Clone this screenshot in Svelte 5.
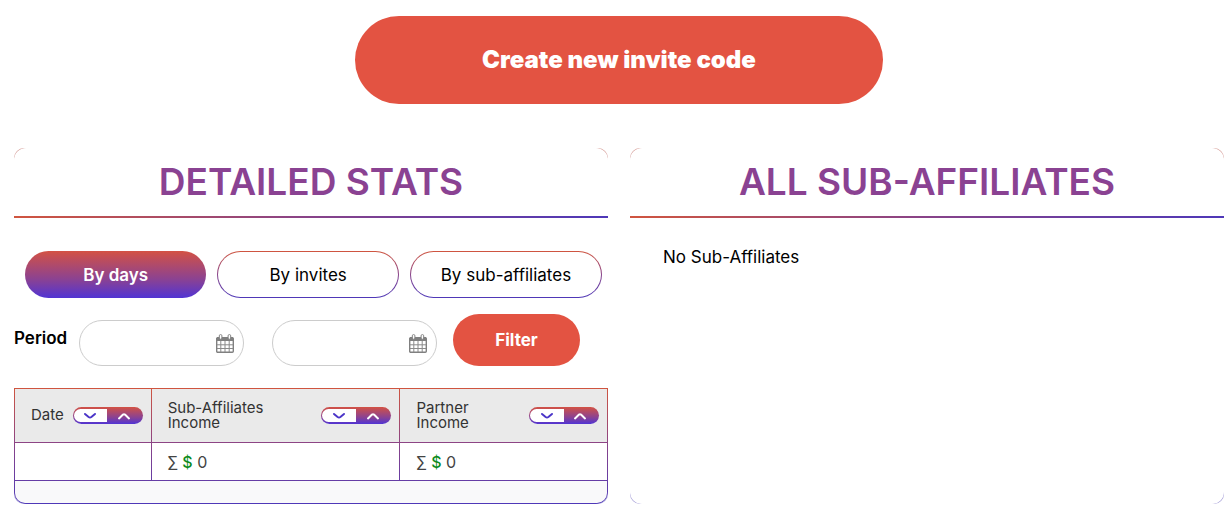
<script>
    const tabs = [
        { id: 'days', label: 'By days' },
        { id: 'invites', label: 'By invites' },
        { id: 'subs', label: 'By sub-affiliates' }
    ];

    const columns = [
        { id: 'date', label: 'Date' },
        { id: 'sub', label: 'Sub-Affiliates Income', total: 0 },
        { id: 'partner', label: 'Partner Income', total: 0 }
    ];

    let activeTab = $state('days');
    let sort = $state({ column: 'date', direction: 'asc' });
    let period = $state({ from: '', to: '' });

    const setSort = (column, direction) => {
        sort = { column, direction };
    };
</script>

{#snippet calendar()}
    <svg class="calendar" viewBox="0 0 18 19" aria-hidden="true">
        <path d="M1 3h16v4H1z" fill="#808080" />
        <rect x="0.7" y="3.6" width="16.6" height="14.7" rx="1" fill="none" stroke="#808080" stroke-width="1.4" />
        <path d="M4.8 7v11M9 7v11M13.2 7v11M1 10.8h16M1 14.5h16" stroke="#8a8a8a" stroke-width="1" />
        <rect x="3.3" y="0.6" width="2.6" height="4.6" rx="1.2" fill="#fff" stroke="#808080" />
        <rect x="12.1" y="0.6" width="2.6" height="4.6" rx="1.2" fill="#fff" stroke="#808080" />
    </svg>
{/snippet}

<main>
    <button class="create">Create new invite code</button>

    <div class="cards">
        <section class="card">
            <div class="card-body">
                <h2>Detailed stats</h2>

                <div class="tabs">
                    {#each tabs as tab}
                        <button class="tab" class:active={activeTab === tab.id} onclick={() => (activeTab = tab.id)}>
                            {tab.label}
                        </button>
                    {/each}
                </div>

                <form class="period" onsubmit={(ev) => ev.preventDefault()}>
                    <label class="period-label" for="from">Period</label>
                    <div class="date-box">
                        <input id="from" type="text" bind:value={period.from} />
                        {@render calendar()}
                    </div>
                    <div class="date-box second">
                        <input type="text" aria-label="Period end" bind:value={period.to} />
                        {@render calendar()}
                    </div>
                    <button class="filter">Filter</button>
                </form>

                <table>
                    <colgroup>
                        <col class="col-date" />
                        <col class="col-sub" />
                        <col />
                    </colgroup>
                    <thead>
                        <tr>
                            {#each columns as column}
                                <th>
                                    <div class="head">
                                        <span>{column.label}</span>
                                        <div class="sorter">
                                            <button aria-label="Sort descending" onclick={() => setSort(column.id, 'desc')}>
                                                <svg viewBox="0 0 12 6"><path d="M1 1l3.6 3q1.4 1 2.8 0L11 1" stroke="#4b35c8" /></svg>
                                            </button>
                                            <button class="up" aria-label="Sort ascending" onclick={() => setSort(column.id, 'asc')}>
                                                <svg viewBox="0 0 12 6"><path d="M1 5.4l4-3.8q1-.8 2 0l4 3.8" stroke="#fff" /></svg>
                                            </button>
                                        </div>
                                    </div>
                                </th>
                            {/each}
                        </tr>
                    </thead>
                    <tbody>
                        <tr>
                            {#each columns as column}
                                <td>
                                    {#if column.total !== undefined}
                                        ∑ <span class="currency">$</span> {column.total}
                                    {/if}
                                </td>
                            {/each}
                        </tr>
                    </tbody>
                    <tfoot>
                        <tr><td colspan="3"></td></tr>
                    </tfoot>
                </table>
            </div>
        </section>

        <section class="card">
            <div class="card-body">
                <h2>All sub-affiliates</h2>
                <p class="empty">No Sub-Affiliates</p>
            </div>
        </section>
    </div>
</main>

<style>
    :global(body) {
        margin: 0;
        background: #fff;
    }

    main {
        --red: #e35342;
        --fade: #d35244, #8b4292 60%, #5134d4;
        --line: #d0553f, #884389 50%, #4e38b8;
        padding: 16px 8px 16px 14px;
        font-family: Inter, "Liberation Sans", sans-serif;
        color: #000;
    }

    button, input {
        font-family: inherit;
        box-sizing: border-box;
        margin: 0;
        border: none;
    }

    button {
        cursor: pointer;
    }

    .create {
        display: block;
        width: 100%;
        max-width: 528px;
        height: 88px;
        margin: 0 auto 44px;
        padding: 0 0 2px;
        border-radius: 44px;
        background: var(--red);
        color: #fff;
        font-size: 24px;
        font-weight: 900;
    }

    .cards {
        display: grid;
        grid-template-columns: 1fr 1fr;
        gap: 22px;
    }

    /* the gradient only peeks out at the rounded corners */
    .card {
        display: grid;
        border-radius: 10px;
        background: linear-gradient(#d8a39d, #bba0cf, #a59fd8);
        overflow: hidden;
    }

    .card-body {
        min-width: 0;
        border-radius: 12px;
        background: #fff;
        overflow: hidden;
    }

    h2 {
        margin: 0;
        padding-bottom: 2px;
        background: linear-gradient(to right, var(--line)) bottom / 100% 2px no-repeat;
        color: #8a4292;
        font-size: 37px;
        font-weight: 600;
        line-height: 68px;
        text-align: center;
        text-transform: uppercase;
    }

    .tabs {
        display: grid;
        grid-template-columns: 17fr 17fr 18fr;
        gap: 11px;
        padding: 33px 6px 0 11px;
    }

    .tab {
        height: 47px;
        padding: 0;
        border: 1px solid transparent;
        border-radius: 24px;
        background: linear-gradient(#fff, #fff) padding-box, linear-gradient(var(--line)) border-box;
        color: #000;
        font-size: 17px;
        white-space: nowrap;
    }

    .tab.active {
        background: linear-gradient(var(--fade)) border-box;
        color: #fff;
        font-weight: 600;
    }

    .period {
        display: flex;
        align-items: flex-end;
        margin: 16px 0 22px;
    }

    .period-label {
        align-self: flex-start;
        width: 65px;
        font-size: 17px;
        font-weight: 600;
        line-height: 48px;
    }

    .date-box {
        display: flex;
        align-items: center;
        box-sizing: border-box;
        width: 165px;
        height: 46px;
        padding: 0 9px 0 16px;
        border: 1px solid #ccc;
        border-radius: 23px;
    }

    .date-box.second {
        margin: 0 16px 0 28px;
    }

    .date-box input {
        flex: 1;
        min-width: 0;
        padding: 0;
        background: none;
        font-size: 15px;
        outline: none;
    }

    .calendar {
        flex: none;
        width: 18px;
        height: 19px;
    }

    .filter {
        width: 127px;
        height: 52px;
        border-radius: 26px;
        background: var(--red);
        color: #fff;
        font-size: 17px;
        font-weight: 700;
    }

    table {
        width: 100%;
        table-layout: fixed;
        border-spacing: 1px;
        background: linear-gradient(var(--line));
        font-size: 15px;
    }

    .col-date {
        width: 23%;
    }

    .col-sub {
        width: 42%;
    }

    th {
        height: 53px;
        padding: 0 8px 0 16px;
        background: #eaeaea;
        color: #333;
        font-weight: 400;
        line-height: 15px;
        text-align: left;
    }

    .head {
        display: flex;
        align-items: center;
        justify-content: space-between;
    }

    .head span {
        max-width: 100px;
        padding-bottom: 2px;
    }

    .sorter {
        display: flex;
        flex: none;
        box-sizing: border-box;
        width: 70px;
        height: 17px;
        padding: 2px 2px 2px 1px;
        border-radius: 9px;
        background: linear-gradient(var(--fade));
    }

    .sorter button {
        display: flex;
        flex: 1;
        align-items: center;
        justify-content: center;
        padding: 0;
        border-radius: 8px 0 0 8px;
        background: #fff;
    }

    .sorter .up {
        background: none;
    }

    .sorter svg {
        width: 12px;
        height: 6px;
        fill: none;
        stroke-width: 2;
        stroke-linecap: round;
        overflow: visible;
    }

    td {
        height: 37px;
        padding: 0 16px;
        background: #fff;
        color: #444;
        font-size: 16px;
    }

    .currency {
        color: #0b8a1c;
        font-weight: 500;
    }

    tfoot td {
        height: 22px;
        background: #f9f9fa;
        border-radius: 0 0 10px 10px;
    }

    .empty {
        margin: 0;
        padding: 27px 33px;
        font-size: 17px;
        line-height: 24px;
    }
</style>
